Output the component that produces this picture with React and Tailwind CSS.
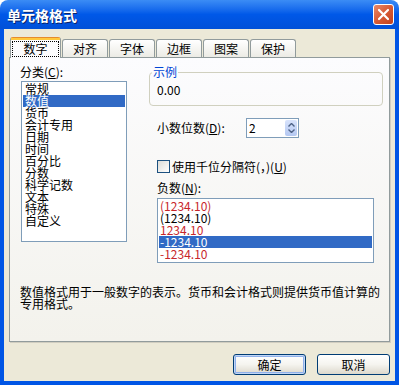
import React from "react";

const categories = ["常规", "数值", "货币", "会计专用", "日期", "时间", "百分比", "分数", "科学记数", "文本", "特殊", "自定义"];

const negatives = [
    {text: "(1234.10)", red: true},
    {text: "(1234.10)"},
    {text: "1234.10", red: true},
    {text: "-1234.10", red: true, selected: true},
    {text: "-1234.10", red: true},
];

const tabs = ["对齐", "字体", "边框", "图案", "保护"];

const Tab = ({label}) => (
    <div className="ml-[1px] flex h-[18px] w-[46px] items-center justify-center rounded-t-[3px] border border-b-0 border-[#919b9c] bg-gradient-to-b from-white to-[#ecebe5] text-[12px] leading-[12px]">
        {label}
    </div>
)

const XpButton = ({label, isDefault}) => (
    <button
        className={`flex h-[21px] w-[73px] items-center justify-center rounded-[3px] border border-[#003c74] bg-gradient-to-b from-white via-[#f5f4ef] to-[#dcd8cc] text-[12px] leading-[12px] text-black ${isDefault ? "shadow-[inset_0_0_0_1px_#c1d6f5,inset_0_0_0_2px_#8fb0ea]" : ""}`}
    >
        {label}
    </button>
)

const App = () => {
    return (
        <div className="h-[385px] w-[399px] bg-white font-['Noto_Sans_CJK_SC',sans-serif] text-black">
            <div className="flex h-full flex-col overflow-hidden rounded-t-[8px]">
                {/* title bar */}
                <div className="flex h-[29px] items-center justify-between bg-gradient-to-b from-[#3b8cf5] via-[#0058e8] to-[#0050d8] pl-[7px] pr-[5px]">
                    <span className="text-[14px] font-bold leading-[14px] text-white [text-shadow:1px_1px_0_#0a246a]">单元格格式</span>
                    <div className="flex h-[21px] w-[21px] items-center justify-center rounded-[3px] border border-white bg-gradient-to-br from-[#e8896a] via-[#d75a35] to-[#c1401c]">
                        <svg width="13" height="13" viewBox="0 0 13 13">
                            <path d="M2 2 L11 11 M11 2 L2 11" stroke="white" strokeWidth="2.2" strokeLinecap="round"/>
                        </svg>
                    </div>
                </div>

                {/* body */}
                <div className="flex flex-1 flex-col border-x-4 border-b-4 border-[#0055e5] bg-[#ece9d8] px-[5px] pt-[8px]">
                    {/* tabs */}
                    <div className="relative z-10 flex h-[20px] items-end pl-[1px]">
                        <div className="mb-[-1px] flex h-[21px] w-[51px] flex-col rounded-t-[3px] border-x border-t border-[#919b9c] border-t-[#e68b2c] bg-[#fcfcfe]">
                            <div className="h-[2px] bg-[#ffc83c]"/>
                            <div className="mx-[1px] mt-[1px] flex h-[16px] items-center justify-center border border-dotted border-black text-[12px] leading-[12px]">
                                数字
                            </div>
                        </div>
                        {tabs.map(t => <Tab key={t} label={t}/>)}
                    </div>

                    {/* tab page */}
                    <div className="flex h-[285px] flex-col border border-[#919b9c] bg-gradient-to-b from-[#fcfcfe] to-[#f3f2ec] shadow-[1px_1px_0_#d0cdc0]">
                        <div className="flex">
                            {/* category list */}
                            <div className="flex flex-col pl-[10px]">
                                <div className="mt-[8px] text-[12px] leading-[12px]">分类(<u>C</u>):</div>
                                <div className="ml-[1px] mt-[3px] h-[161px] w-[106px] border border-[#7f9db9] bg-white px-[1px] pt-[1px]">
                                    {categories.map(c => (
                                        <div
                                            key={c}
                                            className={`h-[12px] pl-[2px] text-[12px] leading-[12px] ${c === "数值" ? "bg-[#316ac5] text-white" : ""}`}
                                        >
                                            {c}
                                        </div>
                                    ))}
                                </div>
                            </div>

                            {/* right side */}
                            <div className="ml-[22px] flex w-[234px] flex-col">
                                <fieldset className="mt-[8px] h-[40px] rounded-[4px] border border-[#d0d0bf] pl-[7px]">
                                    <legend className="ml-[-5px] px-[1px] text-[12px] leading-[12px] text-[#0046d5]">示例</legend>
                                    <div className="mt-[6px] text-[12px] leading-[12px]">0.00</div>
                                </fieldset>

                                <div className="mt-[12px] flex items-center pl-[8px]">
                                    <span className="w-[89px] text-[12px] leading-[12px]">小数位数(<u>D</u>):</span>
                                    <div className="flex h-[20px] w-[53px] items-center justify-between border border-[#7f9db9] bg-white pl-[2px] pr-[1px]">
                                        <span className="text-[12px] leading-[12px]">2</span>
                                        <div className="flex h-[16px] w-[12px] flex-col items-center justify-center gap-[2px] rounded-[2px] bg-gradient-to-b from-[#d8e3fb] to-[#b4c8f2]">
                                            <svg width="7" height="4" viewBox="0 0 7 4"><path d="M0.5 3.5 L3.5 0.5 L6.5 3.5" fill="none" stroke="#4d6185" strokeWidth="1.4"/></svg>
                                            <svg width="7" height="4" viewBox="0 0 7 4"><path d="M0.5 0.5 L3.5 3.5 L6.5 0.5" fill="none" stroke="#4d6185" strokeWidth="1.4"/></svg>
                                        </div>
                                    </div>
                                </div>

                                <div className="mt-[22px] flex items-center pl-[8px]">
                                    <div className="h-[13px] w-[13px] border border-[#1c5180] bg-gradient-to-br from-[#dcdcd7] to-white"/>
                                    <span className="ml-[2px] text-[12px] leading-[12px]">使用千位分隔符(，)(<u>U</u>)</span>
                                </div>

                                <div className="mt-[9px] pl-[8px] text-[12px] leading-[12px]">负数(<u>N</u>):</div>
                                <div className="ml-[8px] mt-[4px] h-[65px] w-[217px] border border-[#7f9db9] bg-white px-[1px] pt-[1px]">
                                    {negatives.map((n, i) => (
                                        <div
                                            key={i}
                                            className={`h-[12px] pl-[1px] text-[12px] leading-[12px] ${n.selected ? "bg-[#316ac5] text-white" : n.red ? "text-[#c8262b]" : "text-black"}`}
                                        >
                                            {n.text}
                                        </div>
                                    ))}
                                </div>
                            </div>
                        </div>

                        <p className="mt-[23px] pl-[10px] text-[12px] leading-[12px]">
                            数值格式用于一般数字的表示。货币和会计格式则提供货币值计算的<br/>专用格式。
                        </p>
                    </div>

                    {/* buttons */}
                    <div className="mt-[12px] flex justify-end gap-[11px]">
                        <XpButton label="确定" isDefault/>
                        <XpButton label="取消"/>
                    </div>
                </div>
            </div>
        </div>
    )
}

export default App;
